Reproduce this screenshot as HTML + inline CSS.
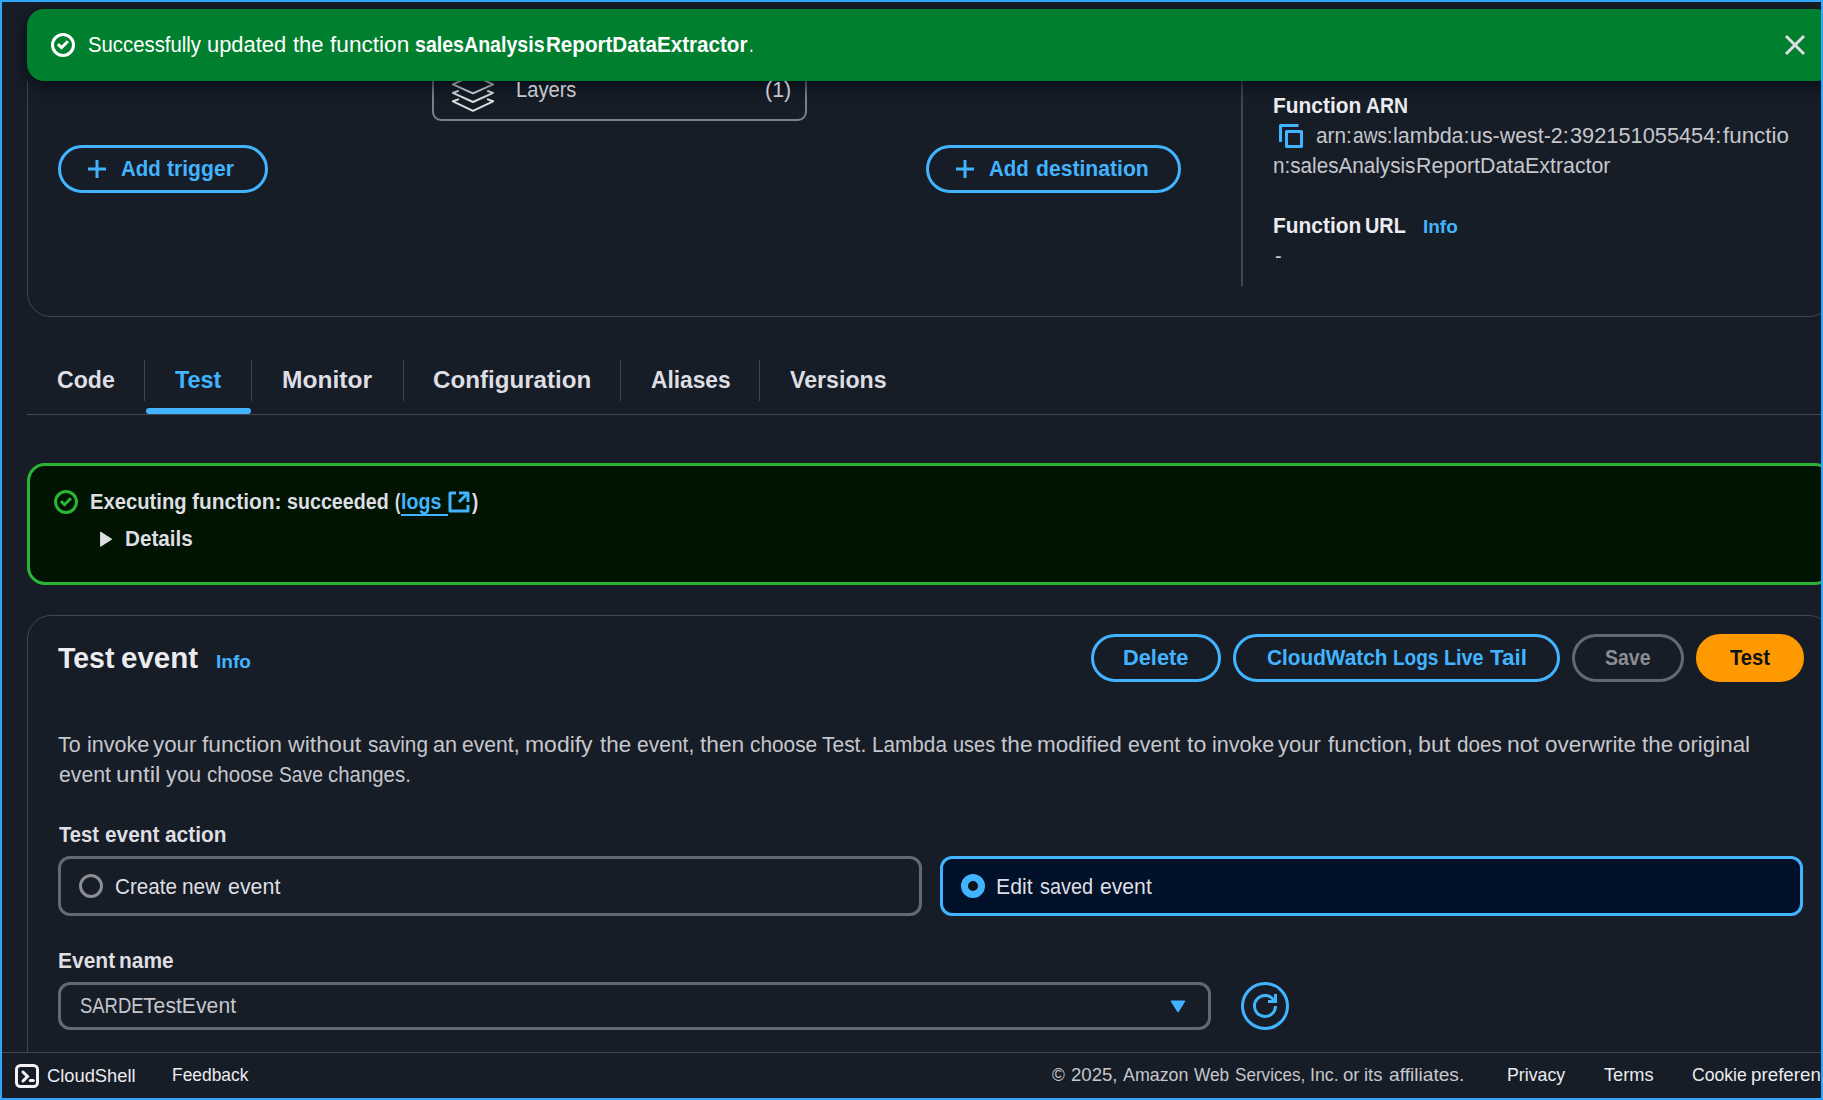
<!DOCTYPE html>
<html lang="en">
<head>
<meta charset="utf-8">
<title>salesAnalysisReportDataExtractor - Lambda</title>
<style>
*{box-sizing:border-box;margin:0;padding:0}
html,body{width:1823px;height:1100px;overflow:hidden;background:#161d26}
body{position:relative;font-family:"Liberation Sans",sans-serif;color:#c6c6cd}
.abs{position:absolute}
.t{position:absolute;white-space:nowrap;line-height:30px;transform-origin:0 0;font-family:"Liberation Sans",sans-serif}
svg{position:absolute;overflow:visible}
.container{position:absolute;border:1px solid #424650;border-radius:24px;background:#161d26}
.btn{position:absolute;height:48px;border-radius:24px;border:3px solid #42b4ff}
.tabsep{position:absolute;top:360px;width:1px;height:41px;background:#424650}
.tile{position:absolute;top:856px;height:60px;border-radius:12px;border:3px solid #656871}
</style>
</head>
<body>

<!-- function overview container (top clipped) -->
<div class="container" style="left:27px;top:-60px;width:1806px;height:377px"></div>

<!-- Layers box -->
<div class="abs" style="left:432px;top:58px;width:375px;height:63px;border:2px solid #7d8089;border-radius:9px"></div>
<svg style="left:450px;top:70px" width="46" height="46" viewBox="0 0 46 46" fill="none" stroke="#dcdfe3" stroke-width="2" stroke-linejoin="round">
  <path d="M2.900 14.300 23 5 43.100 14.300 23 23.300Z"/>
  <path d="M8.800 20.700 2.900 22.900 23 32 43.100 22.900 37.200 20.700"/>
  <path d="M9 29.100 2.900 31.300 23 40.800 43.100 31.300 37 29.100"/>
</svg>

<!-- vertical divider in overview -->
<div class="abs" style="left:1241px;top:60px;width:2px;height:226px;background:#424650"></div>

<!-- Add trigger / Add destination -->
<div class="btn" style="left:58px;top:145px;width:210px"></div>
<svg style="left:85px;top:157px" width="24" height="24" viewBox="0 0 24 24" fill="none" stroke="#42b4ff" stroke-width="3"><path d="M12 3v18M3 12h18"/></svg>
<div class="btn" style="left:926px;top:145px;width:255px"></div>
<svg style="left:953px;top:157px" width="24" height="24" viewBox="0 0 24 24" fill="none" stroke="#42b4ff" stroke-width="3"><path d="M12 3v18M3 12h18"/></svg>

<!-- copy icon -->
<svg style="left:1279px;top:124px" width="24" height="24" viewBox="0 0 24 24" fill="none" stroke="#42b4ff" stroke-width="3" stroke-linejoin="round"><path d="M7.500 7.500h15v15h-15z"/><path d="M19.500 1.500h-18v16.500"/></svg>

<!-- flash bar -->
<div class="abs" style="left:0;top:0;width:1823px;height:81px;background:#161d26"></div>
<div class="abs" style="left:27px;top:9px;width:1806px;height:72px;background:#00802f;border-radius:17px;box-shadow:0 6px 14px rgba(0,7,22,.65)"></div>
<svg style="left:51px;top:33px" width="24" height="24" viewBox="0 0 24 24" fill="none" stroke="#ffffff" stroke-width="3"><circle cx="12" cy="12" r="10.500"/><path d="M6.900 11.200l3.600 3.500 6.400-6.500"/></svg>
<svg style="left:1783px;top:32.500px" width="24" height="24" viewBox="0 0 24 24" fill="none" stroke="#dedee3" stroke-width="3"><path d="M3 3l18 18M21 3L3 21"/></svg>

<!-- tabs -->
<div class="abs" style="left:27px;top:414px;width:1800px;height:1px;background:#424650"></div>
<div class="tabsep" style="left:144px"></div>
<div class="tabsep" style="left:251px"></div>
<div class="tabsep" style="left:403px"></div>
<div class="tabsep" style="left:620px"></div>
<div class="tabsep" style="left:759px"></div>
<div class="abs" style="left:146px;top:408px;width:105px;height:6px;border-radius:3px;background:#42b4ff"></div>

<!-- success alert -->
<div class="abs" style="left:27px;top:463px;width:1806px;height:122px;border:3px solid #2bb534;border-radius:18px;background:#001401"></div>
<svg style="left:54px;top:490px" width="24" height="24" viewBox="0 0 24 24" fill="none" stroke="#2bb534" stroke-width="3"><circle cx="12" cy="12" r="10.500"/><path d="M6.900 11.200l3.600 3.500 6.400-6.500"/></svg>
<div class="abs" style="left:401px;top:514px;width:47px;height:2px;background:#42b4ff"></div>
<svg style="left:447px;top:490px" width="24" height="24" viewBox="0 0 24 24" fill="none" stroke="#42b4ff" stroke-width="3" stroke-linejoin="round"><path d="M9 3H3v18h18v-6"/><path d="M12 3h9v9"/><path d="M21 3l-9 9"/></svg>
<svg style="left:100px;top:531px" width="13" height="17" viewBox="0 0 13 17"><path d="M.6 1.100 11.700 8.200 .6 15.300Z" fill="#dedee3" stroke="#dedee3" stroke-width="1" stroke-linejoin="round"/></svg>

<!-- test event container -->
<div class="container" style="left:27px;top:615px;width:1806px;height:600px"></div>
<div class="btn" style="left:1091px;top:634px;width:130px"></div>
<div class="btn" style="left:1233px;top:634px;width:327px"></div>
<div class="btn" style="left:1572px;top:634px;width:112px;border-color:#656871"></div>
<div class="btn" style="left:1696px;top:634px;width:108px;border-color:#ff9900;background:#ff9900"></div>

<!-- tiles -->
<div class="tile" style="left:58px;width:864px"></div>
<div class="abs" style="left:79px;top:874px;width:24px;height:24px;border-radius:50%;border:3px solid #8c8c94"></div>
<div class="tile" style="left:940px;width:863px;border-color:#42b4ff;background:#001129"></div>
<div class="abs" style="left:961px;top:874px;width:24px;height:24px;border-radius:50%;border:7px solid #42b4ff;background:#0f141a"></div>

<!-- select -->
<div class="abs" style="left:58px;top:982px;width:1153px;height:48px;border:3px solid #656871;border-radius:12px"></div>
<svg style="left:1170px;top:1000px" width="16" height="13" viewBox="0 0 16 13"><path d="M1.400 1.200h13.200L8 11.500Z" fill="#42b4ff" stroke="#42b4ff" stroke-width="1.400" stroke-linejoin="round"/></svg>

<!-- refresh button -->
<div class="abs" style="left:1241px;top:982px;width:48px;height:48px;border-radius:50%;border:3px solid #42b4ff"></div>
<svg style="left:1253px;top:994px" width="24" height="24" viewBox="0 0 24 24" fill="none" stroke="#42b4ff" stroke-width="3"><path d="M22.500 12A10.500 10.500 0 1 1 21.500 7.500"/><path d="M15 7.500h7.500V0"/></svg>

<!-- footer -->
<div class="abs" style="left:0;top:1052px;width:1823px;height:48px;background:#161d26;border-top:1px solid #424650"></div>
<svg style="left:15px;top:1064px" width="24" height="24" viewBox="0 0 24 24" fill="none" stroke="#f2f2f7" stroke-width="3" stroke-linecap="round" stroke-linejoin="round"><rect x="1.500" y="1.500" width="21" height="21" rx="4" stroke-linecap="butt"/><path d="M8 8l4.500 4.500L8 17" stroke-linejoin="miter"/><path d="M15.300 16.500h3"/></svg>

<span class="t" style="left:87.70px;top:30px;font-size:21.5px;font-weight:400;color:#ffffff;transform:scaleX(0.9454);">Successfully</span>
<span class="t" style="left:207.18px;top:30px;font-size:21.5px;font-weight:400;color:#ffffff;transform:scaleX(1.0190);">updated</span>
<span class="t" style="left:292.70px;top:30px;font-size:21.5px;font-weight:400;color:#ffffff;transform:scaleX(1.0231);">the</span>
<span class="t" style="left:329.60px;top:30px;font-size:21.5px;font-weight:400;color:#ffffff;transform:scaleX(1.0532);">function</span>
<span class="t" style="left:414.90px;top:30px;font-size:21.5px;font-weight:700;color:#ffffff;transform:scaleX(0.9109);">salesAnalysis</span>
<span class="t" style="left:545.94px;top:30px;font-size:21.5px;font-weight:700;color:#ffffff;transform:scaleX(0.9580);">ReportDataExtractor</span>
<span class="t" style="left:749.43px;top:30px;font-size:21.5px;font-weight:400;color:#ffffff;transform:scaleX(0.7750);">.</span>
<span class="t" style="left:515.56px;top:75px;font-size:21.5px;font-weight:400;color:#c6c6cd;transform:scaleX(0.9366);">Layers</span>
<span class="t" style="left:764.60px;top:75px;font-size:21.5px;font-weight:400;color:#c6c6cd;transform:scaleX(0.9993);">(1)</span>
<span class="t" style="left:120.75px;top:154px;font-size:21.5px;font-weight:700;color:#42b4ff;transform:scaleX(0.9506);">Add</span>
<span class="t" style="left:167.00px;top:154px;font-size:21.5px;font-weight:700;color:#42b4ff;transform:scaleX(0.9822);">trigger</span>
<span class="t" style="left:989.40px;top:154px;font-size:21.5px;font-weight:700;color:#42b4ff;transform:scaleX(0.9493);">Add</span>
<span class="t" style="left:1035.70px;top:154px;font-size:21.5px;font-weight:700;color:#42b4ff;transform:scaleX(0.9829);">destination</span>
<span class="t" style="left:1272.93px;top:91px;font-size:21.5px;font-weight:700;color:#ebebf0;transform:scaleX(0.9727);">Function</span>
<span class="t" style="left:1366.00px;top:91px;font-size:21.5px;font-weight:700;color:#ebebf0;transform:scaleX(0.9033);">ARN</span>
<span class="t" style="left:1315.70px;top:121px;font-size:21.5px;font-weight:400;color:#c6c6cd;transform:scaleX(0.9674);">arn:</span>
<span class="t" style="left:1352.80px;top:121px;font-size:21.5px;font-weight:400;color:#c6c6cd;transform:scaleX(0.8905);">aws:</span>
<span class="t" style="left:1393.10px;top:121px;font-size:21.5px;font-weight:400;color:#c6c6cd;transform:scaleX(1.0011);">lambda:</span>
<span class="t" style="left:1470.11px;top:121px;font-size:21.5px;font-weight:400;color:#c6c6cd;transform:scaleX(0.9949);">us-west-2:</span>
<span class="t" style="left:1570.00px;top:121px;font-size:21.5px;font-weight:400;color:#c6c6cd;transform:scaleX(1.0129);">392151055454:</span>
<span class="t" style="left:1723.00px;top:121px;font-size:21.5px;font-weight:400;color:#c6c6cd;transform:scaleX(1.0396);">functio</span>
<span class="t" style="left:1272.94px;top:151px;font-size:21.5px;font-weight:400;color:#c6c6cd;transform:scaleX(0.9609);">n:salesAnalysis</span>
<span class="t" style="left:1415.91px;top:151px;font-size:21.5px;font-weight:400;color:#c6c6cd;transform:scaleX(0.9923);">ReportDataExtractor</span>
<span class="t" style="left:1272.93px;top:211px;font-size:21.5px;font-weight:700;color:#ebebf0;transform:scaleX(0.9727);">Function</span>
<span class="t" style="left:1365.08px;top:211px;font-size:21.5px;font-weight:700;color:#ebebf0;transform:scaleX(0.9221);">URL</span>
<span class="t" style="left:1423.17px;top:212px;font-size:18.43px;font-weight:700;color:#42b4ff;transform:scaleX(1.0306);">Info</span>
<span class="t" style="left:1274.50px;top:241px;font-size:21.5px;font-weight:400;color:#c6c6cd;transform:scaleX(0.9286);">-</span>
<span class="t" style="left:57.06px;top:365px;font-size:24.57px;font-weight:700;color:#dedee3;transform:scaleX(0.9415);">Code</span>
<span class="t" style="left:175.00px;top:365px;font-size:24.57px;font-weight:700;color:#42b4ff;transform:scaleX(0.9536);">Test</span>
<span class="t" style="left:282.00px;top:365px;font-size:24.57px;font-weight:700;color:#dedee3;transform:scaleX(1.0003);">Monitor</span>
<span class="t" style="left:432.77px;top:365px;font-size:24.57px;font-weight:700;color:#dedee3;transform:scaleX(0.9828);">Configuration</span>
<span class="t" style="left:651.00px;top:365px;font-size:24.57px;font-weight:700;color:#dedee3;transform:scaleX(0.9254);">Aliases</span>
<span class="t" style="left:790.00px;top:365px;font-size:24.57px;font-weight:700;color:#dedee3;transform:scaleX(0.9436);">Versions</span>
<span class="t" style="left:89.86px;top:487px;font-size:21.5px;font-weight:700;color:#dedee3;transform:scaleX(0.9403);">Executing</span>
<span class="t" style="left:192.20px;top:487px;font-size:21.5px;font-weight:700;color:#dedee3;transform:scaleX(0.9738);">function:</span>
<span class="t" style="left:286.90px;top:487px;font-size:21.5px;font-weight:700;color:#dedee3;transform:scaleX(0.9145);">succeeded</span>
<span class="t" style="left:395.26px;top:487px;font-size:21.5px;font-weight:700;color:#dedee3;transform:scaleX(0.7429);">(</span>
<span class="t" style="left:400.99px;top:487px;font-size:21.5px;font-weight:700;color:#42b4ff;transform:scaleX(0.9135);">logs</span>
<span class="t" style="left:471.80px;top:487px;font-size:21.5px;font-weight:700;color:#dedee3;transform:scaleX(0.8714);">)</span>
<span class="t" style="left:125.44px;top:524px;font-size:21.5px;font-weight:700;color:#dedee3;transform:scaleX(0.9619);">Details</span>
<span class="t" style="left:57.90px;top:643px;font-size:30.3px;font-weight:700;color:#ebebf0;transform:scaleX(0.9390);">Test</span>
<span class="t" style="left:121.13px;top:643px;font-size:30.3px;font-weight:700;color:#ebebf0;transform:scaleX(0.9749);">event</span>
<span class="t" style="left:216.46px;top:647px;font-size:18.43px;font-weight:700;color:#42b4ff;transform:scaleX(1.0367);">Info</span>
<span class="t" style="left:1122.99px;top:643px;font-size:21.5px;font-weight:700;color:#42b4ff;transform:scaleX(1.0130);">Delete</span>
<span class="t" style="left:1266.90px;top:643px;font-size:21.5px;font-weight:700;color:#42b4ff;transform:scaleX(0.9662);">CloudWatch</span>
<span class="t" style="left:1392.82px;top:643px;font-size:21.5px;font-weight:700;color:#42b4ff;transform:scaleX(0.8849);">Logs</span>
<span class="t" style="left:1444.48px;top:643px;font-size:21.5px;font-weight:700;color:#42b4ff;transform:scaleX(0.9200);">Live</span>
<span class="t" style="left:1490.40px;top:643px;font-size:21.5px;font-weight:700;color:#42b4ff;transform:scaleX(1.0444);">Tail</span>
<span class="t" style="left:1605.40px;top:643px;font-size:21.5px;font-weight:700;color:#8c8c94;transform:scaleX(0.9074);">Save</span>
<span class="t" style="left:1729.70px;top:643px;font-size:21.5px;font-weight:700;color:#0f141a;transform:scaleX(0.9399);">Test</span>
<span class="t" style="left:58.20px;top:730px;font-size:21.5px;font-weight:400;color:#c6c6cd;transform:scaleX(0.9978);">To</span>
<span class="t" style="left:86.80px;top:730px;font-size:21.5px;font-weight:400;color:#c6c6cd;transform:scaleX(1.0035);">invoke</span>
<span class="t" style="left:153.30px;top:730px;font-size:21.5px;font-weight:400;color:#c6c6cd;transform:scaleX(1.0369);">your</span>
<span class="t" style="left:202.20px;top:730px;font-size:21.5px;font-weight:400;color:#c6c6cd;transform:scaleX(1.0626);">function</span>
<span class="t" style="left:288.27px;top:730px;font-size:21.5px;font-weight:400;color:#c6c6cd;transform:scaleX(1.0745);">without</span>
<span class="t" style="left:367.50px;top:730px;font-size:21.5px;font-weight:400;color:#c6c6cd;transform:scaleX(0.9642);">saving</span>
<span class="t" style="left:433.00px;top:730px;font-size:21.5px;font-weight:400;color:#c6c6cd;transform:scaleX(1.0062);">an</span>
<span class="t" style="left:462.30px;top:730px;font-size:21.5px;font-weight:400;color:#c6c6cd;transform:scaleX(0.9827);">event,</span>
<span class="t" style="left:525.23px;top:730px;font-size:21.5px;font-weight:400;color:#c6c6cd;transform:scaleX(1.0675);">modify</span>
<span class="t" style="left:599.70px;top:730px;font-size:21.5px;font-weight:400;color:#c6c6cd;transform:scaleX(1.0404);">the</span>
<span class="t" style="left:636.70px;top:730px;font-size:21.5px;font-weight:400;color:#c6c6cd;transform:scaleX(0.9775);">event,</span>
<span class="t" style="left:700.10px;top:730px;font-size:21.5px;font-weight:400;color:#c6c6cd;transform:scaleX(1.0565);">then</span>
<span class="t" style="left:749.50px;top:730px;font-size:21.5px;font-weight:400;color:#c6c6cd;transform:scaleX(0.9682);">choose</span>
<span class="t" style="left:821.80px;top:730px;font-size:21.5px;font-weight:400;color:#c6c6cd;transform:scaleX(0.9746);">Test.</span>
<span class="t" style="left:872.04px;top:730px;font-size:21.5px;font-weight:400;color:#c6c6cd;transform:scaleX(0.9643);">Lambda</span>
<span class="t" style="left:953.27px;top:730px;font-size:21.5px;font-weight:400;color:#c6c6cd;transform:scaleX(0.9275);">uses</span>
<span class="t" style="left:1000.80px;top:730px;font-size:21.5px;font-weight:400;color:#c6c6cd;transform:scaleX(1.0542);">the</span>
<span class="t" style="left:1037.46px;top:730px;font-size:21.5px;font-weight:400;color:#c6c6cd;transform:scaleX(1.0440);">modified</span>
<span class="t" style="left:1128.30px;top:730px;font-size:21.5px;font-weight:400;color:#c6c6cd;transform:scaleX(0.9920);">event</span>
<span class="t" style="left:1186.60px;top:730px;font-size:21.5px;font-weight:400;color:#c6c6cd;transform:scaleX(1.0794);">to</span>
<span class="t" style="left:1212.10px;top:730px;font-size:21.5px;font-weight:400;color:#c6c6cd;transform:scaleX(1.0035);">invoke</span>
<span class="t" style="left:1278.40px;top:730px;font-size:21.5px;font-weight:400;color:#c6c6cd;transform:scaleX(1.0273);">your</span>
<span class="t" style="left:1328.20px;top:730px;font-size:21.5px;font-weight:400;color:#c6c6cd;transform:scaleX(1.0448);">function,</span>
<span class="t" style="left:1418.42px;top:730px;font-size:21.5px;font-weight:400;color:#c6c6cd;transform:scaleX(1.0825);">but</span>
<span class="t" style="left:1456.80px;top:730px;font-size:21.5px;font-weight:400;color:#c6c6cd;transform:scaleX(0.9614);">does</span>
<span class="t" style="left:1506.83px;top:730px;font-size:21.5px;font-weight:400;color:#c6c6cd;transform:scaleX(1.0687);">not</span>
<span class="t" style="left:1545.20px;top:730px;font-size:21.5px;font-weight:400;color:#c6c6cd;transform:scaleX(1.0445);">overwrite</span>
<span class="t" style="left:1641.70px;top:730px;font-size:21.5px;font-weight:400;color:#c6c6cd;transform:scaleX(1.0404);">the</span>
<span class="t" style="left:1678.20px;top:730px;font-size:21.5px;font-weight:400;color:#c6c6cd;transform:scaleX(1.0388);">original</span>
<span class="t" style="left:58.60px;top:760px;font-size:21.5px;font-weight:400;color:#c6c6cd;transform:scaleX(0.9882);">event</span>
<span class="t" style="left:116.37px;top:760px;font-size:21.5px;font-weight:400;color:#c6c6cd;transform:scaleX(1.1257);">until</span>
<span class="t" style="left:166.00px;top:760px;font-size:21.5px;font-weight:400;color:#c6c6cd;transform:scaleX(1.0117);">you</span>
<span class="t" style="left:206.70px;top:760px;font-size:21.5px;font-weight:400;color:#c6c6cd;transform:scaleX(0.9565);">choose</span>
<span class="t" style="left:278.70px;top:760px;font-size:21.5px;font-weight:400;color:#c6c6cd;transform:scaleX(0.8970);">Save</span>
<span class="t" style="left:328.40px;top:760px;font-size:21.5px;font-weight:400;color:#c6c6cd;transform:scaleX(0.9492);">changes.</span>
<span class="t" style="left:58.60px;top:820px;font-size:21.5px;font-weight:700;color:#dedee3;transform:scaleX(0.9375);">Test</span>
<span class="t" style="left:105.00px;top:820px;font-size:21.5px;font-weight:700;color:#dedee3;transform:scaleX(0.9696);">event</span>
<span class="t" style="left:165.30px;top:820px;font-size:21.5px;font-weight:700;color:#dedee3;transform:scaleX(0.9714);">action</span>
<span class="t" style="left:114.74px;top:872px;font-size:21.5px;font-weight:400;color:#dedee3;transform:scaleX(0.9605);">Create</span>
<span class="t" style="left:182.23px;top:872px;font-size:21.5px;font-weight:400;color:#dedee3;transform:scaleX(0.9714);">new</span>
<span class="t" style="left:227.90px;top:872px;font-size:21.5px;font-weight:400;color:#dedee3;transform:scaleX(0.9958);">event</span>
<span class="t" style="left:996.41px;top:872px;font-size:21.5px;font-weight:400;color:#dedee3;transform:scaleX(0.9869);">Edit</span>
<span class="t" style="left:1039.90px;top:872px;font-size:21.5px;font-weight:400;color:#dedee3;transform:scaleX(0.9235);">saved</span>
<span class="t" style="left:1099.70px;top:872px;font-size:21.5px;font-weight:400;color:#dedee3;transform:scaleX(0.9844);">event</span>
<span class="t" style="left:57.62px;top:946px;font-size:21.5px;font-weight:700;color:#dedee3;transform:scaleX(0.9758);">Event</span>
<span class="t" style="left:119.13px;top:946px;font-size:21.5px;font-weight:700;color:#dedee3;transform:scaleX(0.9727);">name</span>
<span class="t" style="left:79.70px;top:991px;font-size:21.5px;font-weight:400;color:#c6c6cd;transform:scaleX(0.8571);">SARDE</span>
<span class="t" style="left:143.20px;top:991px;font-size:21.5px;font-weight:400;color:#c6c6cd;transform:scaleX(0.9859);">TestEvent</span>
<span class="t" style="left:47.00px;top:1061px;font-size:18.43px;font-weight:400;color:#ebebf0;transform:scaleX(0.9943);">CloudShell</span>
<span class="t" style="left:171.56px;top:1060px;font-size:18.43px;font-weight:400;color:#ebebf0;transform:scaleX(0.9450);">Feedback</span>
<span class="t" style="left:1052.10px;top:1060px;font-size:18.43px;font-weight:400;color:#c6c6cd;transform:scaleX(0.9429);">©</span>
<span class="t" style="left:1071.40px;top:1060px;font-size:18.43px;font-weight:400;color:#c6c6cd;transform:scaleX(1.0093);">2025,</span>
<span class="t" style="left:1122.50px;top:1060px;font-size:18.43px;font-weight:400;color:#c6c6cd;transform:scaleX(0.9683);">Amazon</span>
<span class="t" style="left:1193.80px;top:1060px;font-size:18.43px;font-weight:400;color:#c6c6cd;transform:scaleX(0.9383);">Web</span>
<span class="t" style="left:1235.00px;top:1060px;font-size:18.43px;font-weight:400;color:#c6c6cd;transform:scaleX(0.9285);">Services,</span>
<span class="t" style="left:1309.84px;top:1060px;font-size:18.43px;font-weight:400;color:#c6c6cd;transform:scaleX(0.9647);">Inc.</span>
<span class="t" style="left:1343.40px;top:1060px;font-size:18.43px;font-weight:400;color:#c6c6cd;transform:scaleX(1.0095);">or</span>
<span class="t" style="left:1364.39px;top:1060px;font-size:18.43px;font-weight:400;color:#c6c6cd;transform:scaleX(1.0052);">its</span>
<span class="t" style="left:1388.80px;top:1060px;font-size:18.43px;font-weight:400;color:#c6c6cd;transform:scaleX(1.0400);">affiliates.</span>
<span class="t" style="left:1507.24px;top:1060px;font-size:18.43px;font-weight:400;color:#ebebf0;transform:scaleX(0.9637);">Privacy</span>
<span class="t" style="left:1604.00px;top:1060px;font-size:18.43px;font-weight:400;color:#ebebf0;transform:scaleX(0.9893);">Terms</span>
<span class="t" style="left:1691.50px;top:1060px;font-size:18.43px;font-weight:400;color:#ebebf0;transform:scaleX(0.9562);">Cookie</span>
<span class="t" style="left:1750.58px;top:1060px;font-size:18.43px;font-weight:400;color:#ebebf0;transform:scaleX(1.0198);">preferen</span>
<span class="t" style="left:1821.40px;top:1060px;font-size:18.43px;font-weight:400;color:#ebebf0;transform:scaleX(0.9300);">ces</span>

<!-- viewport frame -->
<div class="abs" style="left:0;top:0;width:1823px;height:1100px;border:2px solid #32a5ff;border-bottom-width:2px;pointer-events:none"></div>
</body>
</html>
